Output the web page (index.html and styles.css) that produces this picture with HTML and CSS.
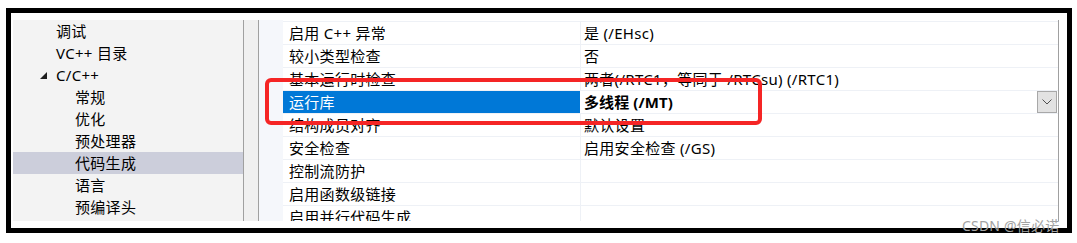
FILE: index.html
```html
<!DOCTYPE html>
<html lang="zh-CN">
<head>
<meta charset="utf-8">
<title>属性页</title>
<link rel="stylesheet" href="styles.css">
</head>
<body>
<div class="page">
  <div class="frame">
    <div class="content">
      <div class="tree">
        <div class="node lv1">调试</div>
        <div class="node lv1">VC++ 目录</div>
        <div class="node lv0"><svg class="tri" width="7" height="7" viewBox="0 0 7 7"><polygon points="7,0 7,7 0,7" fill="#1e1e1e"/></svg>C/C++</div>
        <div class="node lv2">常规</div>
        <div class="node lv2">优化</div>
        <div class="node lv2">预处理器</div>
        <div class="node lv2 selected">代码生成</div>
        <div class="node lv2">语言</div>
        <div class="node lv2">预编译头</div>
      </div>
      <div class="splitter"></div>
      <div class="gutter"></div>
      <div class="grid">
        <div class="row"><div class="name">启用 C++ 异常</div><div class="value">是 (/EHsc)</div></div>
        <div class="row"><div class="name">较小类型检查</div><div class="value">否</div></div>
        <div class="row"><div class="name">基本运行时检查</div><div class="value">两者(/RTC1，等同于 /RTCsu) (/RTC1)</div></div>
        <div class="row active"><div class="name">运行库</div><div class="value"><span class="strong">多线程 (/MT)</span><span class="drop"><svg width="10" height="6" viewBox="0 0 10 6"><polyline points="0.5,0.5 5,5 9.5,0.5" fill="none" stroke="#505050" stroke-width="1"/></svg></span></div></div>
        <div class="row"><div class="name">结构成员对齐</div><div class="value">默认设置</div></div>
        <div class="row"><div class="name">安全检查</div><div class="value">启用安全检查 (/GS)</div></div>
        <div class="row"><div class="name">控制流防护</div><div class="value"></div></div>
        <div class="row"><div class="name">启用函数级链接</div><div class="value"></div></div>
        <div class="row"><div class="name">启用并行代码生成</div><div class="value"></div></div>
      </div>
    </div>
  </div>
  <div class="highlight"></div>
  <div class="watermark">CSDN @信必诺</div>
</div>
</body>
</html>
```
FILE: styles.css
```css
html, body {
  margin: 0;
  padding: 0;
  background: #ffffff;
}
body {
  font-family: "Noto Sans", "Noto Sans CJK SC", sans-serif;
  font-size: 15px;
  letter-spacing: 0.3px;
  color: #000000;
}
.page {
  position: relative;
  width: 1077px;
  height: 243px;
  overflow: hidden;
}
.frame {
  margin: 8px 0 0 6px;
  width: 1066px;
  height: 225px;
  box-sizing: border-box;
  border: 5px solid #000000;
  background: #ffffff;
  padding: 7px 8px 7px 2px;
}
.content {
  display: flex;
  height: 201px;
  overflow: hidden;
}
.tree {
  width: 230px;
  flex: none;
  background: #f3f3f3;
}
.node {
  height: 22px;
  line-height: 22px;
  white-space: nowrap;
  display: flex;
  align-items: center;
}
.lv0 { padding-left: 27px; }
.lv1 { padding-left: 43px; }
.lv2 { padding-left: 62px; }
.tri {
  margin-right: 9px;
  margin-top: 1px;
}
.node.selected {
  background: #cccedb;
}
.splitter {
  width: 14px;
  flex: none;
  background: #f0f0f0;
  border-left: 1px solid #a0a0a0;
  border-right: 1px solid #a0a0a0;
}
.gutter {
  width: 24px;
  flex: none;
  background: #f5f7fb;
}
.grid {
  width: 775px;
  flex: none;
  border-right: 1px solid #a0a0a0;
  background: #ffffff;
  padding-top: 1px;
}
.row {
  display: flex;
  height: 22px;
  border-top: 1px solid #eef1f6;
}
.name {
  width: 291px;
  flex: none;
  padding-left: 6px;
  line-height: 22px;
  white-space: nowrap;
  border-right: 1px solid #eef1f6;
}
.value {
  flex: 1;
  padding-left: 3px;
  line-height: 22px;
  white-space: nowrap;
  display: flex;
  align-items: center;
  justify-content: space-between;
}
.row.active .name {
  background: #0078d7;
  color: #ffffff;
  border-right-color: #ffffff;
}
.strong {
  font-weight: bold;
  letter-spacing: 0.1px;
}
.drop {
  width: 18px;
  height: 20px;
  margin-right: 1px;
  background: #e2e2e2;
  border: 1px solid #a8a8a8;
  display: flex;
  align-items: center;
  justify-content: center;
}
.highlight {
  position: absolute;
  left: 265px;
  top: 78px;
  width: 489px;
  height: 39px;
  border: 4px solid #f52525;
  border-radius: 6px;
}
.watermark {
  position: absolute;
  left: 962px;
  top: 217px;
  font-size: 14px;
  letter-spacing: 0.2px;
  line-height: 18px;
  color: #a3a3a3;
  white-space: nowrap;
}
```
